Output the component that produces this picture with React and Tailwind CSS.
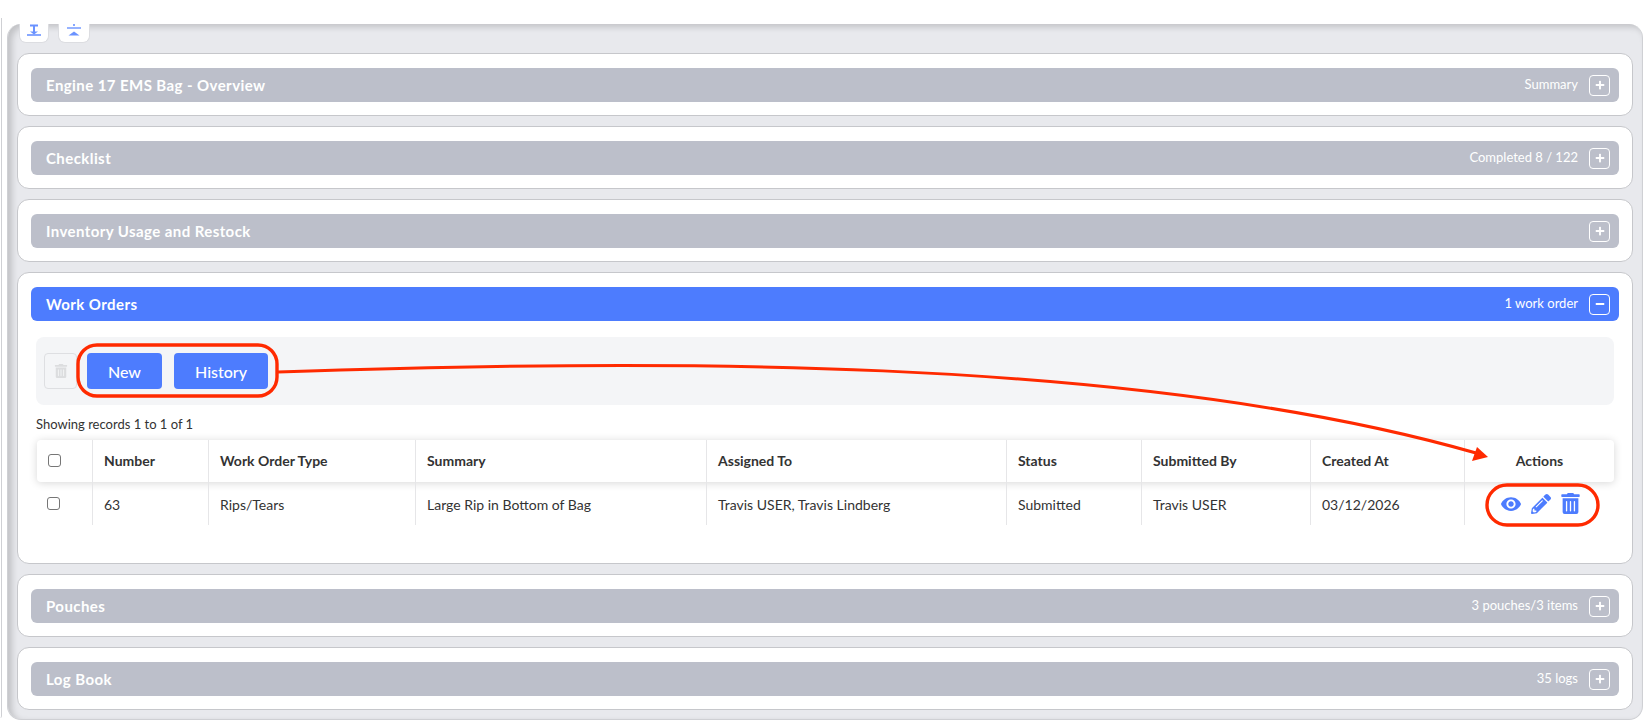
import React from "react";
import { FaPencilAlt, FaTrashAlt, FaPlus, FaMinus } from "react-icons/fa";
import { MdVisibility } from "react-icons/md";

function Header({ title, right, open }) {
  return (
    <div className={`h-[34px] rounded-[6px] flex items-center pl-[15px] pr-[9px] text-white ${open ? "bg-[#4d7cfe]" : "bg-[#bcbfca]"}`}>
      <span className="text-[15px] font-bold tracking-[0.42px] flex-1">{title}</span>
      <span className="text-[13px] mr-[11px]">{right}</span>
      <span className="w-[21px] h-[21px] rounded-[4px] border border-white flex items-center justify-center">
        {open ? <FaMinus size={10} /> : <FaPlus size={10} />}
      </span>
    </div>
  );
}

function Card({ title, right, open, children }) {
  return (
    <div className="bg-white border border-[#c6c7cb] rounded-[12px] pt-[14px] px-[13px] pb-[13px]">
      <Header title={title} right={right} open={open} />
      {children}
    </div>
  );
}

const COLS = "grid grid-cols-[56px_116px_207px_291px_300px_135px_169px_154px_149px]";
const HEAD = ["Number", "Work Order Type", "Summary", "Assigned To", "Status", "Submitted By", "Created At"];
const ROW = ["63", "Rips/Tears", "Large Rip in Bottom of Bag", "Travis USER, Travis Lindberg", "Submitted", "Travis USER", "03/12/2026"];

function Check({ className }) {
  return <input type="checkbox" className={`appearance-none block w-[13px] h-[13px] bg-white border border-[#767676] rounded-[3px] ${className}`} />;
}

function WorkOrders() {
  return (
    <div className="pl-[5px] pr-[5px] pt-[16px] pb-[25px]">
      <div className="h-[68px] bg-[#f4f5f7] rounded-[8px] flex items-center pl-[8px] pr-[6px]">
        <button className="w-[33px] h-[36px] rounded-[4px] border border-[#dedfe2] flex items-center justify-center text-[#dcdddf]">
          <FaTrashAlt size={14} />
        </button>
        <button className="w-[75px] h-[36px] ml-[10px] pt-[2px] rounded-[4px] bg-[#4d7cfe] text-white text-[16px] font-medium">New</button>
        <button className="w-[94px] h-[36px] ml-[12px] pt-[2px] rounded-[4px] bg-[#4d7cfe] text-white text-[16px] font-medium">History</button>
      </div>
      <div className="h-[35px] flex items-end pb-[6px] text-[13px] leading-[20px] text-[#333]">Showing records 1 to 1 of 1</div>
      <div className={`${COLS} ml-[1px] h-[42px] bg-white rounded-[4px] shadow-[0_1px_8px_rgba(0,0,0,0.16)] text-[14px] font-bold text-[#333]`}>
        <div className="flex items-center pl-[11px] border-r border-[#e6e6e8]"><Check className="-mt-[2px]" /></div>
        {HEAD.map((h) => (
          <div key={h} className="flex items-center pl-[11px] pb-[2px] border-r border-[#e6e6e8]">{h}</div>
        ))}
        <div className="flex items-center justify-center pb-[2px]">Actions</div>
      </div>
      <div className={`${COLS} ml-[1px] h-[43px] text-[14px] text-[#333]`}>
        <div className="flex items-center pl-[10px] border-r border-[#e6e6e8]"><Check className="-mt-[1px]" /></div>
        {ROW.map((c) => (
          <div key={c} className="flex items-center pl-[11px] pt-[1px] border-r border-[#e6e6e8]">{c}</div>
        ))}
        <div className="flex items-center pl-[36px] text-[#4d7cfe]">
          <MdVisibility size={22} className="-ml-[1px]" />
          <FaPencilAlt size={20} className="ml-[9px]" />
          <FaTrashAlt size={21} className="ml-[9px]" />
        </div>
      </div>
    </div>
  );
}

export default function App() {
  return (
    <div className="relative w-[1646px] h-[727px] bg-white overflow-hidden font-['Lato','Open_Sans',sans-serif] flex">
      <div className="w-[7px] h-[700px] mt-[18px] shrink-0">
        <div className="w-[2px] h-full border-r border-[#cfd0d4] rounded-br-[4px]"></div>
      </div>
      <div className="mt-[24px] w-[1636px] h-[696px] bg-[#e8e9ed] border border-[#cfd0d4] border-t-0 rounded-[14px] shadow-[inset_4px_3px_6px_rgba(0,0,0,0.17)] px-[9px]">
        <div className="flex h-[19px] gap-[9px] pl-[2px]">
          <div className="w-[30px] h-[19px] bg-white rounded-b-[7px] border border-t-0 border-[#dcdde1] flex justify-center">
            <svg width="16" height="19" viewBox="0 0 16 19" fill="#6a92ff" stroke="#6a92ff">
              <path d="M4 1.5h8M8 1.5v7.5" strokeWidth="2" fill="none" />
              <path d="M4 7.5h8L8 10.5z" stroke="none" />
              <path d="M1 11h14" strokeWidth="1.6" fill="none" />
            </svg>
          </div>
          <div className="w-[32px] h-[19px] bg-white rounded-b-[7px] border border-t-0 border-[#dcdde1] flex justify-center">
            <svg width="18" height="19" viewBox="0 0 18 19" fill="#6a92ff" stroke="#6a92ff">
              <path d="M9 0v2" strokeWidth="1.6" fill="none" />
              <path d="M2 4h14" strokeWidth="1.4" fill="none" />
              <path d="M3.5 11.5h11L9 7.5z" stroke="none" />
            </svg>
          </div>
        </div>
        <div className="flex flex-col gap-[10px] mt-[10px]">
          <Card title="Engine 17 EMS Bag - Overview" right="Summary" />
          <Card title="Checklist" right="Completed 8 / 122" />
          <Card title="Inventory Usage and Restock" right="" />
          <Card title="Work Orders" right="1 work order" open>
            <WorkOrders />
          </Card>
          <Card title="Pouches" right="3 pouches/3 items" />
          <Card title="Log Book" right="35 logs" />
        </div>
      </div>
      <svg className="absolute left-0 top-0 pointer-events-none" width="1646" height="727" fill="none" stroke="#ff2a00" strokeWidth="3.4">
        <rect x="78" y="345" width="199" height="51" rx="19" />
        <rect x="1487" y="485" width="111" height="40" rx="20" />
        <path d="M278 372 C 640 360, 1130 354, 1476 453" strokeWidth="3" />
        <path d="M1488 457 L1472 461 L1477 447 Z" fill="#ff2a00" stroke="none" />
      </svg>
    </div>
  );
}
